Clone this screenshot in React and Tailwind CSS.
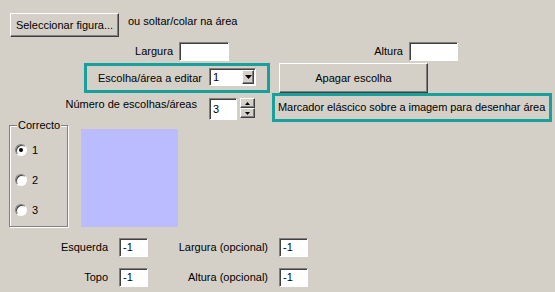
import React from "react";

const sunken =
  "bg-white border border-t-[#808080] border-l-[#808080] border-b-white border-r-white shadow-[inset_1px_1px_0_#404040]";
const raised =
  "bg-[#d4d0c8] border border-t-white border-l-white border-b-[#404040] border-r-[#404040] shadow-[inset_-1px_-1px_0_#808080]";

function Field({ w, h, value }) {
  return (
    <div className={`${sunken} flex items-center pl-[3px] shrink-0 text-black`} style={{ width: w, height: h }}>
      {value}
    </div>
  );
}

function Radio({ checked, label }) {
  return (
    <div className="flex items-center h-[12px]">
      <div className="w-[12px] h-[12px] rounded-full bg-white border border-t-[#808080] border-l-[#808080] border-b-white border-r-white shadow-[inset_1px_1px_0_#404040] flex items-center justify-center">
        {checked && <div className="w-[4px] h-[4px] rounded-full bg-black" />}
      </div>
      <span className="ml-[5px] leading-[12px]">{label}</span>
    </div>
  );
}

export default function App() {
  return (
    <div className="w-[555px] h-[292px] overflow-hidden bg-[#d4d0c8] text-black text-[11px] leading-[13px] font-['Liberation_Sans',Arial,sans-serif] flex flex-col">
      {/* Row 1 */}
      <div className="flex items-start pl-[10px] mt-[13px] h-[24px]">
        <button className={`${raised} w-[109px] h-[24px] flex items-center justify-center text-[11px]`}>
          Seleccionar figura...
        </button>
        <span className="ml-[9px] mt-[2px]">ou soltar/colar na área</span>
      </div>

      {/* Row 2 */}
      <div className="flex items-center mt-[5px] h-[19px]">
        <div className="w-[173px] text-right">Largura</div>
        <div className="ml-[6px]">
          <Field w={50} h={19} />
        </div>
        <div className="w-[174px] text-right">Altura</div>
        <div className="ml-[6px]">
          <Field w={49} h={19} />
        </div>
      </div>

      {/* Row 3 */}
      <div className="flex items-start mt-[2px] h-[30px]">
        <div className="ml-[84px] w-[186px] h-[30px] border-[3px] border-[#17a09c] flex items-center pl-[11px]">
          <div className="w-[111px]">Escolha/área a editar</div>
          <div className={`${sunken} w-[47px] h-[18px] flex items-center justify-between pl-[3px] pr-[1px] -mt-[2px]`}>
            <span>1</span>
            <div className={`${raised} w-[12px] h-[14px] flex items-center justify-center`}>
              <svg width="7" height="4" viewBox="0 0 7 4">
                <path d="M0 0H7L3.5 4Z" fill="#000" />
              </svg>
            </div>
          </div>
        </div>
        <button className={`${raised} ml-[9px] w-[149px] h-[30px] flex items-center justify-center text-[11px]`}>
          Apagar escolha
        </button>
      </div>

      {/* Row 4 */}
      <div className="flex items-start h-[29px]">
        <div className="w-[197px] text-right mt-[5px]">Número de escolhas/áreas</div>
        <div className="ml-[12px] mt-[5px]">
          <Field w={28} h={22} value="3" />
        </div>
        <div className="ml-[3px] mt-[5px] flex flex-col w-[15px]">
          <div className={`${raised} h-[10px] flex items-center justify-center`}>
            <svg width="5" height="3" viewBox="0 0 5 3">
              <path d="M0 3H5L2.5 0Z" fill="#000" />
            </svg>
          </div>
          <div className={`${raised} h-[10px] flex items-center justify-center`}>
            <svg width="5" height="3" viewBox="0 0 5 3">
              <path d="M0 0H5L2.5 3Z" fill="#000" />
            </svg>
          </div>
        </div>
        <div className="ml-[17px] w-[280px] h-[29px] border-[3px] border-[#17a09c] flex items-center pl-[3px] whitespace-nowrap tracking-[-0.06px]">
          Marcador eláscico sobre a imagem para desenhar área
        </div>
      </div>

      {/* Row 5 */}
      <div className="flex items-start mt-[3px]">
        <div className="relative ml-[9px] w-[59px] h-[102px] border border-[#808080] shadow-[inset_1px_1px_0_#ffffff,1px_1px_0_#ffffff]">
          <span className="absolute left-[7px] top-[-7px] bg-[#d4d0c8] px-[1px] leading-[13px]">Correcto</span>
          <div className="flex flex-col gap-[18px] pt-[18px] pl-[5px]">
            <Radio checked label="1" />
            <Radio label="2" />
            <Radio label="3" />
          </div>
        </div>
        <div className="ml-[13px] mt-[4px] w-[97px] h-[98px] bg-[#bbbbff]" />
      </div>

      {/* Row 6 */}
      <div className="flex items-center mt-[11px] h-[19px]">
        <div className="w-[108px] text-right">Esquerda</div>
        <div className="ml-[11px]">
          <Field w={29} h={19} value="-1" />
        </div>
        <div className="w-[120px] text-right">Largura (opcional)</div>
        <div className="ml-[11px]">
          <Field w={29} h={19} value="-1" />
        </div>
      </div>

      {/* Row 7 */}
      <div className="flex items-center mt-[11px] h-[19px]">
        <div className="w-[108px] text-right">Topo</div>
        <div className="ml-[11px]">
          <Field w={29} h={19} value="-1" />
        </div>
        <div className="w-[120px] text-right">Altura (opcional)</div>
        <div className="ml-[11px]">
          <Field w={29} h={19} value="-1" />
        </div>
      </div>
    </div>
  );
}
